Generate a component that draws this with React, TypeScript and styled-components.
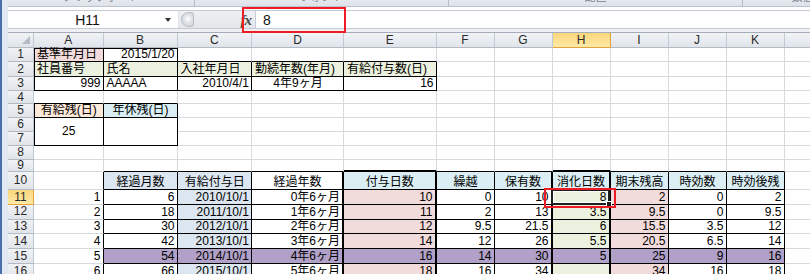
import React from 'react'
import styled, { createGlobalStyle, css } from 'styled-components'

const GlobalStyle = createGlobalStyle`
  body {
    margin: 0;
    background: #fff;
  }
  * {
    box-sizing: border-box;
  }
`

const FONT = `"Liberation Sans", "Noto Sans CJK JP", sans-serif`
const GRID = '#d6d9de'

const pink = '#f2dcdb'
const green = '#ebf1de'
const peach = '#fde9d9'
const cyan = '#daeef3'
const blue = '#dce6f1'
const purple = '#b1a0c7'

const Window = styled.div`
  width: 810px;
  height: 274px;
  overflow: hidden;
  display: flex;
  flex-direction: column;
  border-left: 2px solid #4a6ea9;
  padding-left: 6px;
  background: #e2e8f0;
  font-family: ${FONT};
`

const Ribbon = styled.div`
  height: 7px;
  flex: none;
  display: flex;
  background: linear-gradient(#e6eaef, #dde2e9);
  border-bottom: 1px solid #bcc5d1;
  overflow: hidden;
`

const RibbonGroup = styled.div<{ $w: number }>`
  width: ${p => p.$w}px;
  flex: none;
  display: flex;
  justify-content: center;
  border-right: 1px solid #b3bdca;
  overflow: hidden;
`

const RibbonLabel = styled.span`
  font-size: 11px;
  line-height: 12px;
  margin-top: -9px;
  color: #7a8494;
  white-space: nowrap;
`

const FormulaArea = styled.div`
  position: relative;
  height: 26px;
  flex: none;
  padding-top: 3px;
  background: #fff;
  border-bottom: 1px solid #a4aebb;
  display: flex;
  flex-direction: column;
`

const Bar = styled.div`
  height: 19px;
  display: flex;
  border-top: 1px solid #c4cbd5;
  border-bottom: 1px solid #c4cbd5;
`

const NameBox = styled.div`
  width: 170px;
  display: flex;
  align-items: center;
  background: #fff;
  font-size: 14px;
  line-height: 16px;
  color: #111;
`

const NameText = styled.span`
  flex: 1;
  text-align: center;
  padding-left: 2px;
`

const DropArrow = styled.span`
  width: 0;
  height: 0;
  margin: 1px 7px 0 0;
  border-left: 3.5px solid transparent;
  border-right: 3.5px solid transparent;
  border-top: 4px solid #333;
`

const Tools = styled.div`
  width: 77px;
  display: flex;
  align-items: center;
  background: linear-gradient(#eef0f3, #e3e6ea);
  border-left: 1px solid #dfe3e8;
`

const Splitter = styled.span`
  width: 13px;
  height: 15px;
  margin-left: 2px;
  border-radius: 8px 3px 3px 8px;
  border: 1px solid #b6bcc5;
  background: radial-gradient(circle at 6px 6px, #ffffff 0, #dfe2e6 45%, #c9ced5 100%);
`

const Fx = styled.span`
  margin-left: auto;
  margin-right: 4px;
  font-family: "Liberation Serif", serif;
  font-style: italic;
  font-weight: bold;
  font-size: 15px;
  line-height: 16px;
  color: #4a4a4a;
  letter-spacing: -1px;
`

const Input = styled.div`
  flex: 1;
  display: flex;
  align-items: center;
  padding-left: 7px;
  background: #fff;
  border-left: 1px solid #c4cbd5;
  font-size: 14px;
  line-height: 16px;
  color: #111;
`

const Band = styled.div`
  flex: 1;
  background: #eef0f3;
`

const RedBox = styled.div`
  position: absolute;
  border: 2px solid #ee1c24;
  z-index: 5;
  pointer-events: none;
`

const Sheet = styled.div`
  display: grid;
  grid-template-columns: 26px 69.5px 74px 74.5px 92px 92.5px repeat(6, 58px) 40px;
  grid-template-rows: 15px 14px 15px 14px 13px 14px 14px 14px 14px 12px 18px 15px 14.5px 14.5px 15px 15px 15px;
  background: #fff;
  font-size: 12px;
  color: #000;
`

const Head = styled.div<{ $active?: boolean }>`
  display: flex;
  align-items: center;
  justify-content: center;
  overflow: hidden;
  background: linear-gradient(#f1f3f6, #e0e4e9);
  border-right: 1px solid #c3c9d2;
  border-bottom: 1px solid #b2bac5;
  color: #2a2a2a;
  font-size: 12px;
  line-height: 11px;
  ${p =>
    p.$active &&
    css`
      background: linear-gradient(#f9d67a, #ffe9a6);
      border-right-color: #e2a33c;
      border-bottom-color: #e2a33c;
    `}
`

const Corner = styled(Head)`
  align-items: flex-end;
  justify-content: flex-end;
  padding: 0 3px 3px 0;
`

const Cell = styled.div<{
  $bg?: string
  $align: string
  $r: string
  $b: string
  $shadow: string
  $span: number
  $middle?: boolean
}>`
  position: relative;
  display: flex;
  align-items: ${p => (p.$middle ? 'center' : 'flex-end')};
  justify-content: ${p => p.$align};
  grid-row: span ${p => p.$span};
  padding: 0 2px 1px 3px;
  background: ${p => p.$bg ?? '#fff'};
  border-right: ${p => p.$r};
  border-bottom: ${p => p.$b};
  box-shadow: ${p => p.$shadow};
  line-height: 12px;
  white-space: nowrap;
`

const Selection = styled.div`
  position: absolute;
  top: -1px;
  left: -2px;
  right: -1px;
  bottom: -1px;
  border: 2px solid #1e1e1e;
  box-shadow: inset 0 0 0 1px #fff;
  z-index: 3;
  pointer-events: none;
`

const Handle = styled.span`
  position: absolute;
  right: -4px;
  bottom: -4px;
  width: 6px;
  height: 6px;
  background: #1e1e1e;
  border: 1px solid #fff;
`

type Spec = {
  t?: string
  a?: 'l' | 'c' | 'r'
  bg?: string
  bx?: boolean
  span?: number
  mid?: boolean
  merged?: boolean
  sel?: boolean
}

const E: Spec = {}
const blank = (n: number): Spec[] => Array.from({ length: n }, () => E)

const dataRow = (vals: string[], band?: string, sel?: boolean): Spec[] => {
  const [n, m, d, y, g, k, h, u, z, j, after] = vals
  const bg = (c: string) => band ?? c
  return [
    { t: n, a: 'r' },
    { t: m, a: 'r', bx: true, bg: bg('#fff') },
    { t: d, a: 'r', bx: true, bg: bg(blue) },
    { t: y, a: 'r', bx: true, bg: bg('#fff') },
    { t: g, a: 'r', bx: true, bg: bg(pink) },
    { t: k, a: 'r', bx: true, bg: bg('#fff') },
    { t: h, a: 'r', bx: true, bg: bg('#fff') },
    { t: u, a: 'r', bx: true, bg: bg(green), sel },
    { t: z, a: 'r', bx: true, bg: bg(pink) },
    { t: j, a: 'r', bx: true, bg: bg('#fff') },
    { t: after, a: 'r', bx: true, bg: bg('#fff') },
    E,
  ]
}

const ROWS: Spec[][] = [
  [
    { t: '基準年月日', a: 'l', bg: pink, bx: true },
    { t: '2015/1/20', a: 'r', bx: true },
    ...blank(10),
  ],
  [
    { t: '社員番号', a: 'l', bg: green, bx: true },
    { t: '氏名', a: 'l', bg: green, bx: true },
    { t: '入社年月日', a: 'l', bg: green, bx: true },
    { t: '勤続年数(年月)', a: 'l', bg: green, bx: true },
    { t: '有給付与数(日)', a: 'l', bg: green, bx: true },
    ...blank(7),
  ],
  [
    { t: '999', a: 'r', bx: true },
    { t: 'AAAAA', a: 'l', bx: true },
    { t: '2010/4/1', a: 'r', bx: true },
    { t: '4年9ヶ月', a: 'c', bx: true },
    { t: '16', a: 'r', bx: true },
    ...blank(7),
  ],
  blank(12),
  [
    { t: '有給残(日)', a: 'c', bg: peach, bx: true },
    { t: '年休残(日)', a: 'c', bg: cyan, bx: true },
    ...blank(10),
  ],
  [
    { t: '25', a: 'c', bx: true, span: 2, mid: true },
    { t: '', bx: true, span: 2 },
    ...blank(10),
  ],
  [{ merged: true, bx: true }, { merged: true, bx: true }, ...blank(10)],
  blank(12),
  blank(12),
  [
    E,
    { t: '経過月数', a: 'c', bg: blue, bx: true },
    { t: '有給付与日', a: 'c', bg: blue, bx: true },
    { t: '経過年数', a: 'c', bx: true },
    { t: '付与日数', a: 'c', bg: cyan, bx: true },
    { t: '繰越', a: 'c', bg: cyan, bx: true },
    { t: '保有数', a: 'c', bg: cyan, bx: true },
    { t: '消化日数', a: 'c', bg: cyan, bx: true },
    { t: '期末残高', a: 'c', bg: cyan, bx: true },
    { t: '時効数', a: 'c', bg: cyan, bx: true },
    { t: '時効後残', a: 'c', bg: cyan, bx: true },
    E,
  ],
  dataRow(['1', '6', '2010/10/1', '0年6ヶ月', '10', '0', '10', '8', '2', '0', '2'], undefined, true),
  dataRow(['2', '18', '2011/10/1', '1年6ヶ月', '11', '2', '13', '3.5', '9.5', '0', '9.5']),
  dataRow(['3', '30', '2012/10/1', '2年6ヶ月', '12', '9.5', '21.5', '6', '15.5', '3.5', '12']),
  dataRow(['4', '42', '2013/10/1', '3年6ヶ月', '14', '12', '26', '5.5', '20.5', '6.5', '14']),
  dataRow(['5', '54', '2014/10/1', '4年6ヶ月', '16', '14', '30', '5', '25', '9', '16'], purple),
  dataRow(['6', '66', '2015/10/1', '5年6ヶ月', '18', '16', '34', '', '34', '16', '18']),
]

const COLS = ['A', 'B', 'C', 'D', 'E', 'F', 'G', 'H', 'I', 'J', 'K', 'L']
const THICK = [4, 7]
const ALIGN = { l: 'flex-start', c: 'center', r: 'flex-end' }

const isBx = (r: number, c: number) => !!ROWS[r]?.[c]?.bx

const rightBorder = (r: number, c: number) => {
  if (r >= 9 && (THICK.includes(c) || THICK.includes(c + 1))) return '2px solid #000'
  if (isBx(r, c) || isBx(r, c + 1)) return '1px solid #000'
  return `1px solid ${GRID}`
}

const bottomBorder = (r: number, c: number) => {
  if (r === 8 && THICK.includes(c)) return '2px solid #000'
  if (isBx(r, c) || isBx(r + 1, c)) return '1px solid #000'
  return `1px solid ${GRID}`
}

const insetShadow = (r: number, c: number, s: Spec) => {
  const parts: string[] = []
  if (s.bx && c === 0) parts.push('inset 1px 0 0 #000')
  if (s.bx && r === 0) parts.push('inset 0 1px 0 #000')
  return parts.length ? parts.join(', ') : 'none'
}

export default function App(): React.ReactElement {
  return (
    <>
      <GlobalStyle />
      <Window>
        <Ribbon>
          <RibbonGroup $w={187}>
            <RibbonLabel>クリップボード</RibbonLabel>
          </RibbonGroup>
          <RibbonGroup $w={254}>
            <RibbonLabel>フォント</RibbonLabel>
          </RibbonGroup>
          <RibbonGroup $w={294}>
            <RibbonLabel>配置</RibbonLabel>
          </RibbonGroup>
          <RibbonGroup $w={120}>
            <RibbonLabel>数値</RibbonLabel>
          </RibbonGroup>
        </Ribbon>

        <FormulaArea>
          <Bar>
            <NameBox>
              <NameText>H11</NameText>
              <DropArrow />
            </NameBox>
            <Tools>
              <Splitter />
              <Fx>fx</Fx>
            </Tools>
            <Input>8</Input>
          </Bar>
          <Band />
          <RedBox style={{ left: 234, top: 0, width: 104, height: 26 }} />
        </FormulaArea>

        <Sheet>
          <Corner>
            <svg width="8" height="8" viewBox="0 0 8 8">
              <polygon points="8,0 8,8 0,8" fill="#b4bcc6" />
            </svg>
          </Corner>
          {COLS.map(col => (
            <Head key={col} $active={col === 'H'}>
              {col === 'L' ? '' : col}
            </Head>
          ))}
          {ROWS.map((row, r) => (
            <React.Fragment key={r}>
              <Head $active={r === 10}>{r + 1}</Head>
              {row.map((s, c) =>
                s.merged ? null : (
                  <Cell
                    key={c}
                    $bg={s.bg}
                    $align={ALIGN[s.a ?? 'l']}
                    $r={rightBorder(r, c)}
                    $b={bottomBorder(r + (s.span ?? 1) - 1, c)}
                    $shadow={insetShadow(r, c, s)}
                    $span={s.span ?? 1}
                    $middle={s.mid}
                  >
                    {s.t}
                    {s.sel && (
                      <>
                        <Selection>
                          <Handle />
                        </Selection>
                        <RedBox style={{ left: -9, right: -7, top: -2, bottom: -4 }} />
                      </>
                    )}
                  </Cell>
                )
              )}
            </React.Fragment>
          ))}
        </Sheet>
      </Window>
    </>
  )
}
